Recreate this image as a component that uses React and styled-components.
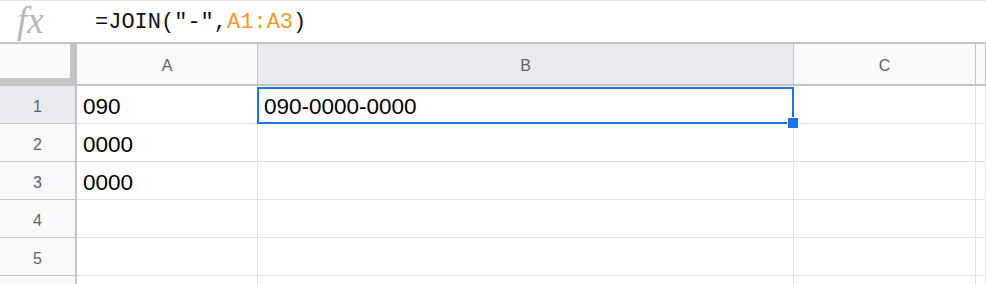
import React from 'react'
import styled, { createGlobalStyle } from 'styled-components';

const Global = createGlobalStyle`
  body {
    margin: 0;
    background: #fff;
    font-family: "Liberation Sans", Arial, sans-serif;
    overflow: hidden;
  }
`;

const columns = ['A', 'B', 'C', ''];
const rows = [
  ['090', '090-0000-0000', '', ''],
  ['0000', '', '', ''],
  ['0000', '', '', ''],
  ['', '', '', ''],
  ['', '', '', ''],
  ['', '', '', ''],
];

export default function App() {
  return (
    <Page>
      <Global />
      <FormulaBar>
        <Fx>fx</Fx>
        <Formula>
          =JOIN(<Str>"-"</Str>,<Ref>A1:A3</Ref>)
        </Formula>
      </FormulaBar>
      <Sheet>
        <Corner />
        {columns.map((c, i) => (
          <ColHeader key={c + i} $active={i === 1}>{c}</ColHeader>
        ))}
        {rows.map((r, ri) => (
          <React.Fragment key={ri}>
            {/* last row is only peeking in, its number is below the fold */}
            <RowHeader $active={ri === 0}>{ri < 5 ? ri + 1 : ''}</RowHeader>
            {r.map((v, ci) => (
              <Cell key={ci}>
                {v}
                {ri === 0 && ci === 1 && (
                  <Selection>
                    <Handle />
                  </Selection>
                )}
              </Cell>
            ))}
          </React.Fragment>
        ))}
      </Sheet>
    </Page>
  )
}

const Page = styled.div`
  width: 986px;
  height: 284px;
  overflow: hidden;
`;

const FormulaBar = styled.div`
  height: 41px;
  border-top: 1px solid #e3e3e3;
  border-bottom: 2px solid #c4c4c4;
  display: flex;
  align-items: center;
`;

const Fx = styled.div`
  width: 95px;
  padding-left: 17px;
  box-sizing: border-box;
  font-family: "Liberation Serif", "Times New Roman", serif;
  font-style: italic;
  font-size: 37px;
  color: #b4b6b8;
  line-height: 1;
  margin-top: -3px;
`;

const Formula = styled.div`
  font-family: "Liberation Mono", "Courier New", monospace;
  font-size: 22px;
  color: #111;
  padding-top: 1px;
`;

const Str = styled.span`
  color: #111;
`;

const Ref = styled.span`
  color: #f09a25;
`;

const Sheet = styled.div`
  display: grid;
  grid-template-columns: 77px 181px 536px 182px 1fr;
  grid-template-rows: 42px;
  grid-auto-rows: 38px;
`;

const Corner = styled.div`
  background: #f8f9fa;
  border-right: 7px solid #c4c4c4;
  border-bottom: 8px solid #c4c4c4;
`;

const ColHeader = styled.div`
  background: ${p => (p.$active ? '#e8eaed' : '#f8f9fa')};
  border-right: 1px solid #c4c4c4;
  border-bottom: 2px solid #c4c4c4;
  display: flex;
  align-items: center;
  justify-content: center;
  padding-top: 3px;
  color: #5f6368;
  font-size: 16px;
`;

const RowHeader = styled.div`
  background: ${p => (p.$active ? '#e8eaed' : '#f8f9fa')};
  border-right: 2px solid #c4c4c4;
  border-bottom: 1px solid #c4c4c4;
  display: flex;
  align-items: center;
  justify-content: center;
  padding-top: 4px;
  color: #5f6368;
  font-size: 16px;
`;

const Cell = styled.div`
  position: relative;
  border-right: 1px solid #e2e3e3;
  border-bottom: 1px solid #e2e3e3;
  display: flex;
  align-items: center;
  padding: 4px 0 0 6px;
  font-size: 22.5px;
  color: #000;
  white-space: nowrap;
`;

const Selection = styled.div`
  position: absolute;
  top: 1px;
  left: -1px;
  right: -1px;
  bottom: -1px;
  border: 2px solid #1a73e8;
  pointer-events: none;
`;

const Handle = styled.div`
  position: absolute;
  right: -7px;
  bottom: -7px;
  width: 10px;
  height: 10px;
  background: #1a73e8;
  border: 1px solid #fff;
  z-index: 2;
`;
